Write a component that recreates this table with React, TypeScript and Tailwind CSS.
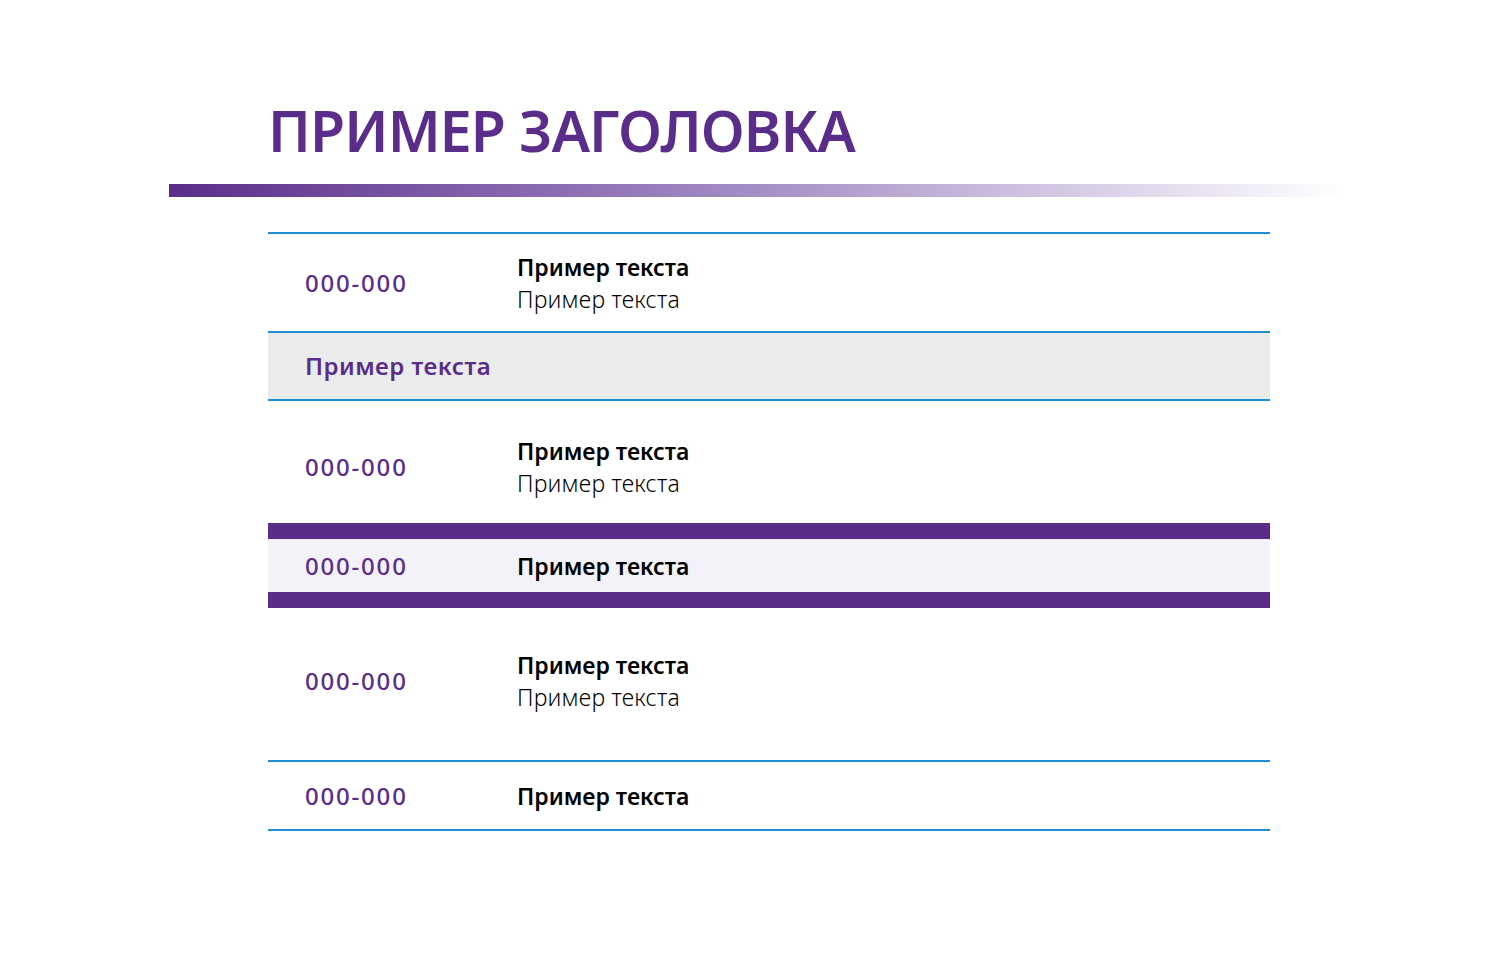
const purple = "text-[#5b2d8a]";

type Row = { num: string; title: string; sub?: string; h: string };

function DataRow({ num, title, sub, h }: Row) {
  return (
    <div className={`flex items-center ${h}`}>
      <div className={`w-[249px] pl-[37px] text-[24px] font-medium tracking-[0.075em] ${purple}`}>{num}</div>
      <div className="flex flex-col text-[23px] leading-[32px] text-black">
        <span className="font-semibold">{title}</span>
        {sub && <span className="font-light tracking-[0.01em]">{sub}</span>}
      </div>
    </div>
  );
}

export default function App() {
  return (
    <div className="min-h-screen bg-white pt-[92px] font-['Noto_Sans',sans-serif]">
      <h1 className={`ml-[268px] text-[57px] font-semibold leading-[76px] tracking-[-0.015em] ${purple}`}>
        ПРИМЕР ЗАГОЛОВКА
      </h1>
      <div className="ml-[169px] mt-[16px] h-[13px] w-[1175px] bg-gradient-to-r from-[#5b2d8a] via-[#a58ec6] to-transparent" />

      <div className="ml-[268px] mt-[35px] w-[1002px]">
        <div className="border-y-2 border-[#1e8fd6]">
          <DataRow num="000-000" title="Пример текста" sub="Пример текста" h="h-[97px]" />
        </div>
        <div className="flex h-[68px] items-center border-b-2 border-[#1e8fd6] bg-[#eaeceb] pl-[37px]">
          <span className={`text-[24px] font-semibold tracking-[0.02em] ${purple}`}>Пример текста</span>
        </div>
        <DataRow num="000-000" title="Пример текста" sub="Пример текста" h="h-[122px] pt-[10px]" />
        <div className="border-y-[16px] border-[#5b2d8a] bg-[#f3f2f8]">
          <DataRow num="000-000" title="Пример текста" h="h-[53px]" />
        </div>
        <div className="border-b-2 border-[#1e8fd6]">
          <DataRow num="000-000" title="Пример текста" sub="Пример текста" h="h-[152px] pb-[7px]" />
        </div>
        <div className="border-b-2 border-[#1e8fd6]">
          <DataRow num="000-000" title="Пример текста" h="h-[67px]" />
        </div>
      </div>
    </div>
  );
}
